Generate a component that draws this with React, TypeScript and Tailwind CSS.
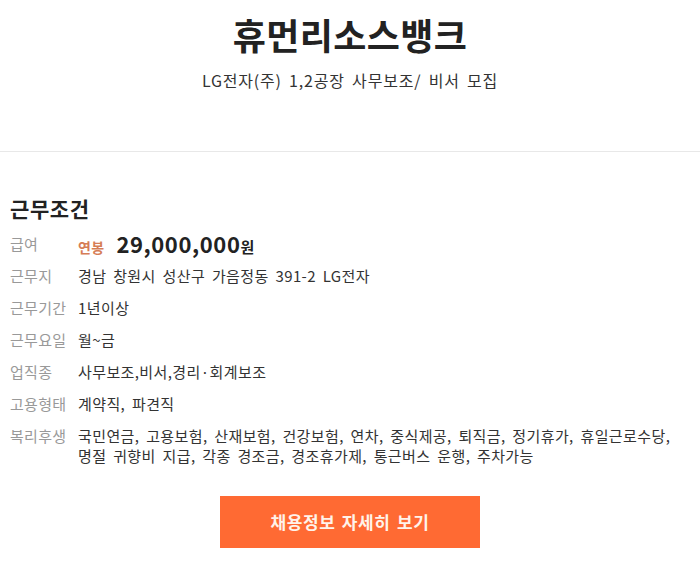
const rows: { label: string; lines: string[] }[] = [
  { label: '근무지', lines: ['경남 창원시 성산구 가음정동 391-2 LG전자'] },
  { label: '근무기간', lines: ['1년이상'] },
  { label: '근무요일', lines: ['월~금'] },
  { label: '업직종', lines: ['사무보조,비서,경리·회계보조'] },
  { label: '고용형태', lines: ['계약직, 파견직'] },
  {
    label: '복리후생',
    lines: [
      '국민연금, 고용보험, 산재보험, 건강보험, 연차, 중식제공, 퇴직금, 정기휴가, 휴일근로수당,',
      '명절 귀향비 지급, 각종 경조금, 경조휴가제, 통근버스 운행, 주차가능',
    ],
  },
];

export default function App() {
  return (
    <div
      className="w-[700px] h-[588px] bg-white text-[#222] overflow-hidden"
      style={{ fontFamily: '"Noto Sans CJK KR", "Noto Sans", sans-serif' }}
    >
      {/* Header */}
      <div className="flex flex-col items-center pt-[10px] h-[152px] border-b border-[#e8e8e8]">
        <h1 className="text-[36px] leading-[48px] font-bold tracking-[0.4px]">휴먼리소스뱅크</h1>
        <p className="mt-[10px] text-[16px] leading-[24px] text-[#333] tracking-[0.8px] [word-spacing:3px]">
          LG전자(주) 1,2공장 사무보조/ 비서 모집
        </p>
      </div>

      {/* Conditions */}
      <div className="px-[10px] pt-[42px]">
        <h2 className="text-[21px] leading-[28px] font-bold tracking-[0.6px]">근무조건</h2>

        <div className="mt-[6px] flex items-center h-[32px]">
          <div className="w-[68px] text-[15px] tracking-[0.3px] text-[#999]">급여</div>
          <div className="flex items-baseline">
            <span className="text-[14px] font-bold text-[#d67d56] tracking-[0.3px]">연봉</span>
            <span className="ml-[12px] text-[22px] font-bold text-[#222] leading-[28px] tracking-[0.6px]">29,000,000</span>
            <span className="text-[15px] font-bold">원</span>
          </div>
        </div>

        {rows.map((r) => (
          <div key={r.label} className="flex items-start py-[6px]">
            <div className="w-[68px] shrink-0 text-[15px] leading-[20px] tracking-[0.3px] text-[#999]">{r.label}</div>
            <div className="text-[15px] leading-[20px] text-[#333] tracking-[0.4px] [word-spacing:3px]">
              {r.lines.map((l) => (
                <div key={l} className="whitespace-nowrap">{l}</div>
              ))}
            </div>
          </div>
        ))}

        <div className="flex justify-center mt-[24px]">
          <button className="w-[260px] h-[52px] bg-[#ff6a33] text-[#fff3ea] text-[17px] font-bold tracking-[0.6px] [word-spacing:2px]">
            채용정보 자세히 보기
          </button>
        </div>
      </div>
    </div>
  );
}
